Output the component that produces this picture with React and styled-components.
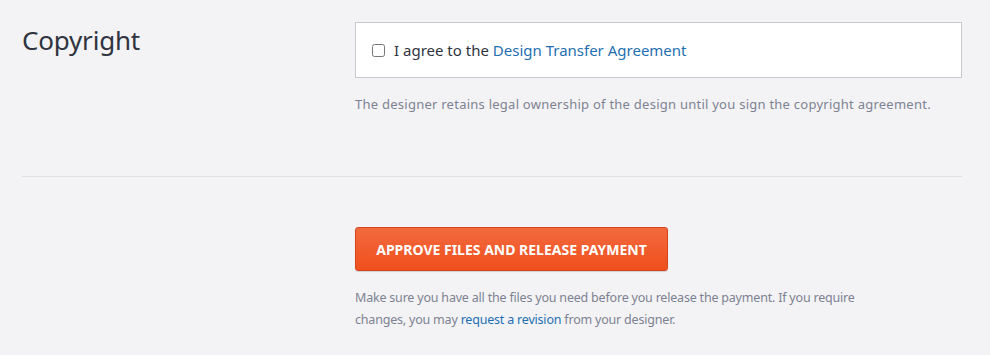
import React from "react";
import styled, { createGlobalStyle } from "styled-components";

const Global = createGlobalStyle`
  html, body { margin: 0; padding: 0; background: #f3f3f5; }
  body { font-family: "Noto Sans", "Open Sans", sans-serif; -webkit-font-smoothing: antialiased; }
`;

const Page = styled.div`
  width: 940px;
  margin-left: 22px;
`;

const Section = styled.section`
  display: grid;
  grid-template-columns: 333px 1fr;
  padding: ${(p) => p.$pad};
  border-top: ${(p) => (p.$divided ? "1px solid #e0e0e3" : "none")};
`;

const Heading = styled.h2`
  margin: 0;
  font-size: 26px;
  font-weight: 400;
  color: #2f3440;
  line-height: 36px;
  letter-spacing: -0.2px;
`;

const Body = styled.div`
  display: flex;
  flex-direction: column;
  align-items: flex-start;
`;

const AgreeBox = styled.label`
  box-sizing: border-box;
  width: 100%;
  height: 56px;
  display: flex;
  align-items: center;
  gap: 8px;
  padding: 0 16px;
  background: #fff;
  border: 1px solid #c8cad2;
  font-size: 15px;
  color: #2f3440;
`;

const Check = styled.input`
  margin: 0 1px 0 0;
  width: 13px;
  height: 13px;
`;

const Link = styled.a`
  color: #1f6fb2;
  text-decoration: none;
`;

const Help = styled.p`
  margin: ${(p) => p.$margin};
  font-size: ${(p) => p.$size};
  line-height: 22px;
  color: #7d8292;
  letter-spacing: ${(p) => p.$spacing};
  max-width: ${(p) => p.$max};
`;

const Button = styled.button`
  box-sizing: border-box;
  width: 313px;
  height: 44px;
  border: 1px solid #d5441a;
  border-radius: 3px;
  background: linear-gradient(#f36a3e, #ef4f1d);
  color: #fff;
  font-family: inherit;
  font-size: 14px;
  font-weight: 700;
  letter-spacing: 0;
  text-transform: uppercase;
  box-shadow: 0 1px 1px rgba(0,0,0,0.15);
  cursor: pointer;
`;

export default function App() {
  return (
    <>
      <Global />
      <Page>
        <Section $pad="22px 0 61px">
          <Heading>Copyright</Heading>
          <Body>
            <AgreeBox>
              <Check type="checkbox" />
              <span>
                I agree to the <Link href="#">Design Transfer Agreement</Link>
              </span>
            </AgreeBox>
            <Help $margin="15px 0 0" $size="13px" $spacing="0.25px" $max="600px">
              The designer retains legal ownership of the design until you sign the copyright agreement.
            </Help>
          </Body>
        </Section>
        <Section $divided $pad="50px 0 0">
          <div />
          <Body>
            <Button>Approve files and release payment</Button>
            <Help $margin="16px 0 0" $size="12.5px" $spacing="-0.2px" $max="510px">
              Make sure you have all the files you need before you release the payment. If you require
              changes, you may <Link href="#">request a revision</Link> from your designer.
            </Help>
          </Body>
        </Section>
      </Page>
    </>
  );
}
